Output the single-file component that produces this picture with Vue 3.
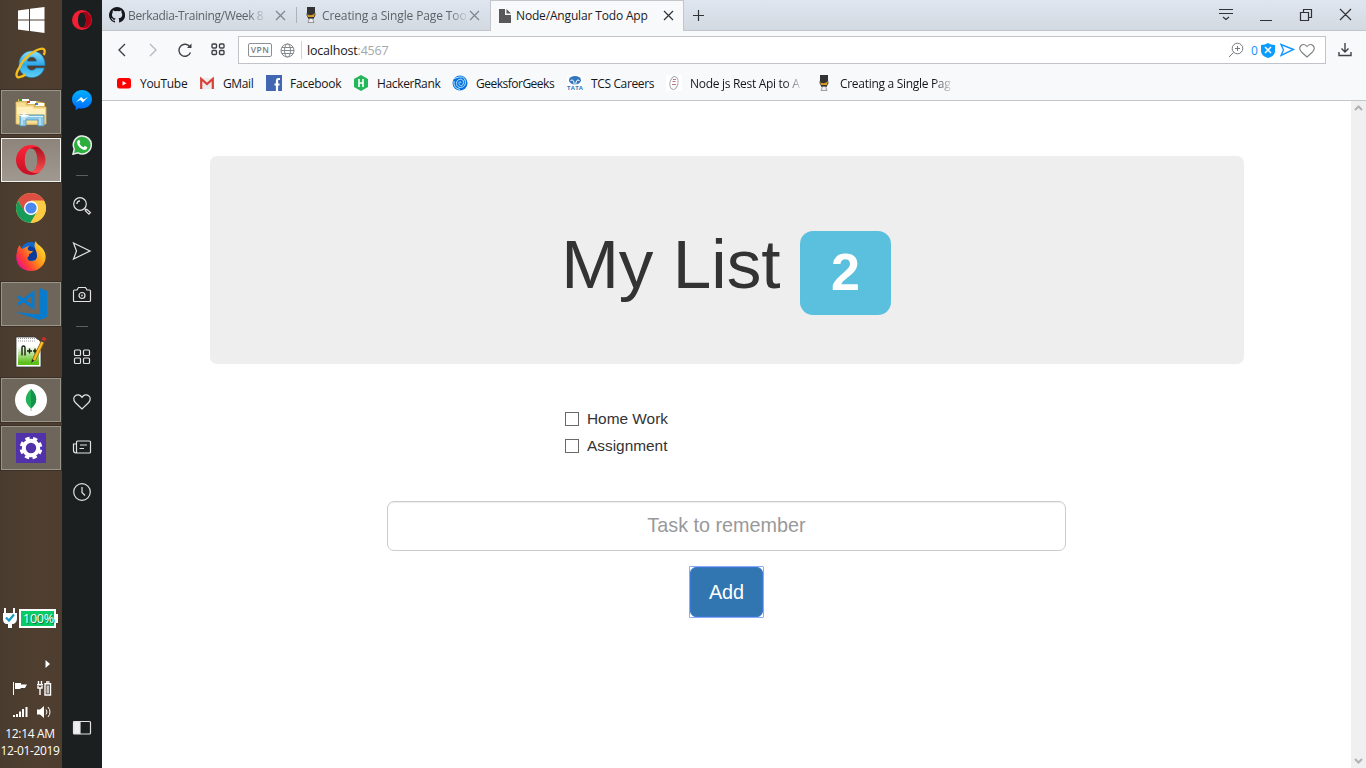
<script setup>
import { ref } from 'vue'

const bookmarks = [
  { id: 'youtube', label: 'YouTube', w: 83 },
  { id: 'gmail', label: 'GMail', w: 67 },
  { id: 'facebook', label: 'Facebook', w: 87 },
  { id: 'hacker', label: 'HackerRank', w: 99 },
  { id: 'geeks', label: 'GeeksforGeeks', w: 115 },
  { id: 'tcs', label: 'TCS Careers', w: 99 },
  { id: 'node', label: 'Node js Rest Api to A', w: 150, fade: true },
  { id: 'scotch', label: 'Creating a Single Pag', w: 140, fade: true }
]
const todos = ref([
  { text: 'Home Work', done: false },
  { text: 'Assignment', done: false }
])
const task = ref('')
</script>

<template>
  <div class="screen">
    <aside class="taskbar">
      <div class="slot start">
        <svg width="28" height="28" viewBox="0 0 28 28"><path fill="#fff" d="M1 4.6 12 3v10.4H1zM13 2.8 27.500 1v12.400H13zM1 14.400h11v10.500L1 23.500zM13 14.400h14.500V27L13 25z"/></svg>
      </div>
      <div class="slot ie">
        <svg width="32" height="32" viewBox="0 0 32 32">
          <defs><linearGradient id="ie" x1="0" y1="0" x2="0" y2="1"><stop offset="0" stop-color="#8be3fb"/><stop offset=".5" stop-color="#2fa9e8"/><stop offset="1" stop-color="#5fd0f7"/></linearGradient></defs>
          <path fill="url(#ie)" stroke="#1d7fc0" stroke-width=".6" d="M30 18.500H12c.3 3 2.300 4.700 4.700 4.700 2 0 3.300-.8 4.300-2.200h8.300c-1.600 5.500-6.300 9.500-12.500 9.500-7.500 0-12.800-5.500-12.800-13C4 10 9.400 4 16.700 4 25 4 30.300 10 30 18.500zM12.200 14.300h9.300c-.3-2.600-2.100-4.200-4.600-4.200-2.600 0-4.300 1.600-4.700 4.200z"/>
          <path fill="none" stroke="#f5bd1d" stroke-width="2.300" d="M4.500 20.500C0 27 1 31 4.500 30.200 8 29.500 10.500 27.500 10.500 27.500M4 21.500C7 13 17 4 25 2c5-1.300 5.500 2 3.800 6"/>
        </svg>
      </div>
      <div class="slot open">
        <svg width="34" height="32" viewBox="0 0 34 32">
          <path fill="#d8b65c" d="M4 3h10l2 2h7l8 2v22H4z"/><path fill="#fff" d="M6 3h9v2H6zM14 5h8v3h-8zM22 7h8v3h-8z"/><path fill="#22a322" d="M5 3h3v2H5z"/><path fill="#d54b32" d="M13 5h3v2h-3z"/><path fill="#2a83d5" d="M21 7h3v2h-3z"/>
          <path fill="#f8df91" stroke="#d9b866" stroke-width=".8" d="M2 6h10v3h8v2h12v17H2z"/><path fill="#fff0bd" d="M3 11h15l2 2h11v5H3z"/>
          <path fill="#8cc8e5" stroke="#4f94bd" stroke-width=".8" d="M6 19h24v11h-6v-6H12v6H6z"/><path stroke="#d7f2ff" d="M7 20.500h22M8 22v7M26 22v7"/><path stroke="#fff" stroke-width="1" d="M10 15v9M5.500 19.500h9M7.500 17l5 5M7.500 22l5-5"/>
        </svg>
      </div>
      <div class="slot open active">
        <svg width="32" height="32" viewBox="0 0 32 32"><defs><linearGradient id="op" x1="0" y1="0" x2="0" y2="1"><stop offset="0" stop-color="#ff2437"/><stop offset="1" stop-color="#c70f24"/></linearGradient><linearGradient id="opr" x1="0" y1="0" x2="0" y2="1"><stop offset="0" stop-color="#a90d1c"/><stop offset="1" stop-color="#ff5252"/></linearGradient></defs><path fill="url(#opr)" d="M11 5c4-4 9-4 13.500-1 8 6.500 8 17.500 0 24-4.500 3-9.500 3-13.500-1z"/><path fill="url(#op)" d="M16 1a15 15 0 1 0 0 30c3.500 0 6.600-1 9-3-6 3-15-.5-15-12S19 1 25 4c-2.400-2-5.500-3-9-3z"/><path fill="#918a81" d="M16 4.500c3.700 0 6.200 4.500 6.200 11.500S19.700 27.500 16 27.500 9.800 23 9.800 16 12.300 4.500 16 4.500z"/></svg>
      </div>
      <div class="slot">
        <svg width="32" height="32" viewBox="0 0 32 32"><circle cx="16" cy="16" r="15" fill="#fbca45"/><path fill="#dd4f43" d="M3 8.500A15 15 0 0 1 29 8.500H16v7.500l-6.300 4z"/><path fill="#179b59" d="M3 8.500A15 15 0 0 0 15.500 31l6.600-11.300-6.100 3.500-6.400-3.700z"/><path fill="#fbca45" d="M15.500 31A15 15 0 0 0 29.200 9H16l6.300 10z"/><circle cx="16" cy="16" r="7" fill="#fff"/><circle cx="16" cy="16" r="5.600" fill="#4a87ee"/></svg>
      </div>
      <div class="slot">
        <svg width="32" height="32" viewBox="0 0 32 32"><defs><linearGradient id="fx" x1="1" y1="0" x2="0" y2=".7"><stop offset="0" stop-color="#fff24a"/><stop offset=".45" stop-color="#ff9d17"/><stop offset=".8" stop-color="#ff3b36"/><stop offset="1" stop-color="#e9158c"/></linearGradient></defs><circle cx="16" cy="13" r="11" fill="#1467cf"/><path fill="#0b3c9c" d="M13 7c8-3 13 8 7 13l-7 1z"/><path fill="url(#fx)" d="M20 8c-1-3 0-6 1-7 0 3 4 4 7 8 7 10-1 22-12 22C5 31-1 22 2 12c0-3 1-5 3-7 0 2 1 3 2 4 2-1 4-2 7-3-1 2-2 3-1 4 1 1 3 1 5 1-1 2-3 3-4 3 1 3-2 3-2 4 2 5 10 4 10-2 0-4-1-5-2-8z"/></svg>
      </div>
      <div class="slot open">
        <svg width="34" height="34" viewBox="0 0 34 34"><path fill="#087bcd" d="M25.500 1 33 4v26l-7.500 3L1 25l24.500 2.500z"/><path fill="none" stroke="#087bcd" stroke-width="3" d="M4 9.500 19 20V6L4 17.500"/></svg>
      </div>
      <div class="slot">
        <svg width="32" height="34" viewBox="0 0 32 34"><defs><linearGradient id="np" x1="0" y1="0" x2="0" y2="1"><stop offset=".25" stop-color="#fff"/><stop offset=".9" stop-color="#5fbf1c"/></linearGradient></defs><path fill="#fff" stroke="#353535" stroke-width=".8" d="M1 2h19l6 5v25H1z"/><path fill="url(#np)" d="M3 5h21v25H3z"/><path stroke="#999" stroke-dasharray="1 1" d="M3 3.500h17M3 6h18"/><path fill="none" stroke="#16210f" stroke-width="1.400" d="M7 20.500V12.500Q7 11 8.500 11T10 12.500v8M12 16h5m-2.500-2.500v5M18 16h4m-2-2.500v5"/><path stroke="#9b650c" stroke-width="4" d="m19 25 8.500-18"/><path stroke="#f6bd26" stroke-width="2.400" d="m19 25 8.500-18"/><path stroke="#c72e2b" stroke-width="4" d="m28.300 5.500 1.400-3"/><path fill="#2c2920" d="m17 24-.7 4 3-2.500z"/></svg>
      </div>
      <div class="slot open">
        <svg width="32" height="32" viewBox="0 0 32 32"><circle cx="16" cy="16" r="16" fill="#fff"/><path fill="#21b25a" d="M16 5c7 7 7 14 0 19.500C9 19 9 12 16 5z"/><path fill="#15924a" d="M16 5c7 7 7 14 0 19.500z"/><path stroke="#aab4ac" d="M16 24v3"/></svg>
      </div>
      <div class="slot open">
        <svg width="30" height="30" viewBox="0 0 30 30"><path fill="#5232ab" d="M0 0h30v30H0z"/><circle cx="15" cy="15" r="7.200" fill="none" stroke="#fff" stroke-width="4"/><circle cx="15" cy="15" r="9.600" fill="none" stroke="#fff" stroke-width="3.500" stroke-dasharray="4.200 3.340" stroke-dashoffset="-1.700"/></svg>
      </div>
      <div class="tray">
        <div class="battery">
          <svg width="62" height="22" viewBox="0 0 62 22"><path fill="#fff" d="M4 1h2v5h7V1h2v5h2v5c0 4-2 6-5 6v4H8v-4c-4 0-5-2-5-6V6h1z"/><path fill="none" stroke="#159dc2" stroke-width="2.200" d="m6 10.500 3 3 5-6"/><path fill="#08cb66" stroke="#fff" stroke-width="2" d="M20 3h35v17H20z"/><path fill="#fff" d="M55 7h3v9h-3z"/></svg>
          <span>100%</span>
        </div>
        <svg class="more" width="6" height="10" viewBox="0 0 6 10"><path fill="#fff" d="M.500 1 5 5 .500 9z"/></svg>
        <div class="trayrow">
          <svg width="15" height="15" viewBox="0 0 15 15"><path fill="#fff" d="M0 1h1v13H0zM2 2h6v1.500h6L12 7H8L7 8H2z"/></svg>
          <svg width="15" height="15" viewBox="0 0 15 15"><path fill="none" stroke="#fff" stroke-width="1.400" d="M1.500 0v3M4.500 0v3M0 3.700h6M1 5v2h4V5M3 7v7M8 2.700h5.500V14H8zM9 1h3.500"/><path fill="#c8c4bf" d="M9.500 4.500h2.500v8H9.500z"/></svg>
        </div>
        <div class="trayrow levels">
          <svg width="15" height="12" viewBox="0 0 15 12"><path fill="#fff" d="M0 9h2v2H0zM3 8h2v3H3zM6 5.500h2V11H6zM9 3h2v8H9zM12.500 1h2v10h-2z"/></svg>
          <svg width="15" height="14" viewBox="0 0 15 14"><path fill="#fff" d="M0 4.500h3L7 1v12L3 9.500H0z"/><path fill="none" stroke="#fff" d="M9 4.500q2 2.500 0 5M11 2q4 5 0 10"/></svg>
        </div>
        <time>12:14 AM</time>
        <time class="date">12-01-2019</time>
      </div>
    </aside>

    <aside class="sidebar">
      <svg class="s-opera" width="20" height="20" viewBox="0 0 20 20"><path fill="#f31f35" fill-rule="evenodd" d="M10 0a10 10 0 1 0 0 20 10 10 0 0 0 0-20zm0 2.500c2.500 0 4 3 4 7.500s-1.500 7.500-4 7.500S6 14.500 6 10s1.500-7.500 4-7.500z"/><path fill="#a70014" d="M10 2.500C13 1 15 2 16 3q7 7 0 14c-2 1.300-4 1.300-6 .5 6 0 5-15 0-15z"/></svg>
      <svg class="s-msg" width="20" height="20" viewBox="0 0 20 20"><defs><linearGradient id="msg" x1="0" y1="0" x2="0" y2="1"><stop stop-color="#00b0ff"/><stop offset="1" stop-color="#006cff"/></linearGradient></defs><path fill="url(#msg)" d="M10 0C4.500 0 0 4 0 9.300c0 3 1.500 5.500 3.700 7.200V20l3.200-1.800c6.700 1.700 13.100-2.600 13.100-8.900C20 4 15.600 0 10 0z"/><path fill="#fff" d="m4 12 5.200-5 2.500 2.500L16 7l-5.200 5.400L8.300 10z"/></svg>
      <svg class="s-wa" width="20" height="20" viewBox="0 0 20 20"><path fill="#2daf3f" stroke="#e9eeeb" stroke-width="1.500" d="M1 19.200 2.300 14A9 9 0 1 1 6 17.800z"/><path fill="#fff" d="M7 5c.5 0 .6.200 1.300 2.100L7.500 8.600c1 1.900 2 2.800 3.900 3.700l1.400-1.400 2.400 1.200c0 2-1 2.800-2.600 2.900-3.700-.4-7-4-7.500-7.200C5 6.300 5.900 5 7 5z"/></svg>
      <i class="rule"></i>
      <svg class="s-line search" width="20" height="20" viewBox="0 0 20 20"><circle cx="8" cy="8" r="6.300"/><path d="M4.800 8A3.500 3.500 0 0 1 8 4.800M12.500 12.500l1.200 1.200m-.4 1.100 1.500-1.500 3.600 3.200-1.500 1.600z"/></svg>
      <svg class="s-line send" width="20" height="20" viewBox="0 0 20 20"><path d="m1.500 2 16.500 8L1.500 18l3-8z"/></svg>
      <svg class="s-line camera" width="20" height="20" viewBox="0 0 20 20"><path d="M2.500 5H5l1.500-2.500h7L15 5h2.500q1 0 1 1v9.500q0 1-1 1h-15q-1 0-1-1V6q0-1 1-1z"/><circle cx="10" cy="10.500" r="3"/><circle cx="10" cy="10.500" r=".3"/></svg>
      <i class="rule two"></i>
      <svg class="s-line dial" width="20" height="20" viewBox="0 0 20 20"><rect x="2.500" y="3" width="6" height="5.500" rx="1"/><rect x="11.500" y="3" width="6" height="5.500" rx="1"/><rect x="2.500" y="11" width="6" height="5.500" rx="1"/><rect x="11.500" y="11" width="6" height="5.500" rx="1"/></svg>
      <svg class="s-line heart" width="20" height="20" viewBox="0 0 20 20"><path d="M10 17 3.300 10.500C-1.500 5 6-.5 10 5.300 14-.5 21.500 5 16.700 10.500z"/></svg>
      <svg class="s-line news" width="20" height="20" viewBox="0 0 20 20"><path d="M5.500 4h12q1 0 1 1v10q0 1-1 1H4q-2.500-.2-2.500-2.500V7h3M4.500 16V5q0-1 1-1M8 8h7M7.500 11.500H12"/></svg>
      <svg class="s-line clock" width="20" height="20" viewBox="0 0 20 20"><circle cx="10" cy="10" r="8.300"/><path d="M10 5v5.500l3 3"/></svg>
      <svg class="s-line panel" width="20" height="16" viewBox="0 0 20 16"><rect x="1.500" y="1.500" width="17" height="12.500" rx="1"/><path fill="#eee" d="M2 2h6v11.500H2z"/></svg>
    </aside>

    <main class="browser">
      <header class="tabs">
        <div class="tab first">
          <svg width="16" height="16" viewBox="0 0 16 16"><path fill="#15171a" d="M8 0a8 8 0 0 0-2.500 15.600c.4 0 .5-.2.500-.4v-1.500c-2.200.5-2.700-.9-2.700-.9-.4-.9-.9-1.200-.9-1.200-.7-.5.1-.5.1-.5.8.1 1.200.8 1.200.8.7 1.200 1.900.9 2.400.7 0-.5.300-.9.500-1.100C4.800 11.300 3 10.600 3 7.600c0-.9.300-1.600.800-2.100-.1-.2-.4-1 .1-2.100 0 0 .7-.2 2.200.8a7.600 7.600 0 0 1 4 0c1.500-1 2.200-.8 2.200-.8.400 1.100.1 1.900.1 2.100.5.500.8 1.200.8 2.100 0 3-1.900 3.700-3.700 3.900.3.300.6.700.6 1.500v2.200c0 .2.100.5.500.4A8 8 0 0 0 8 0z"/></svg>
          <span class="fade">Berkadia-Training/Week 8</span>
          <svg class="x" width="11" height="11" viewBox="0 0 11 11"><path d="m1 1 9 9M10 1l-9 9"/></svg>
        </div>
        <div class="tab second">
          <svg width="12" height="16" viewBox="0 0 12 16"><path fill="#333" d="M2 0h8v5l.5 3-2 4H3.500L1.500 8 2 5z"/><path fill="#d99b20" d="M2 7q4 3 8-1l-1 4H3z"/><path fill="#eee" stroke="#777" stroke-width=".7" d="M4.500 11.500h3L9 15.500H3z"/></svg>
          <span class="fade">Creating a Single Page Too</span>
          <svg class="x" width="11" height="11" viewBox="0 0 11 11"><path d="m1 1 9 9M10 1l-9 9"/></svg>
        </div>
        <div class="tab current">
          <svg width="12" height="14" viewBox="0 0 12 14"><path fill="#58585a" d="M0 0h6v6h6v8H0zM7.500 0 12 4.500H7.500z"/></svg>
          <span>Node/Angular Todo App</span>
          <svg class="x" width="11" height="11" viewBox="0 0 11 11"><path d="m1 1 9 9M10 1l-9 9"/></svg>
        </div>
        <svg class="plus" width="13" height="13" viewBox="0 0 13 13"><path d="M6.500 1v11M1 6.500h11"/></svg>
        <svg class="winctl" width="134" height="16" viewBox="0 0 134 16"><path d="M1 2.500h14M1 6.500h14M5 10l3 2.500L11 10M42 13.500h12M82.500 5.500h8v8h-8zM85.500 5V2.500h8v8H91M122 2l11 11M133 2l-11 11"/></svg>
      </header>

      <nav class="address">
        <svg class="back" width="10" height="16" viewBox="0 0 10 16"><path d="M8 2 2 8l6 6"/></svg>
        <svg class="forward" width="10" height="16" viewBox="0 0 10 16"><path d="m2 2 6 6-6 6"/></svg>
        <svg class="reload" width="16" height="16" viewBox="0 0 16 16"><path d="M13.500 10.500A6 6 0 1 1 13 5"/><path class="solid" d="M14.500 1.500V6H10z"/></svg>
        <svg class="grid" width="14" height="13" viewBox="0 0 14 13"><rect x="1" y="1" width="4.500" height="4" rx="1"/><rect x="8.500" y="1" width="4.500" height="4" rx="1"/><rect x="1" y="7.500" width="4.500" height="4" rx="1"/><rect x="8.500" y="7.500" width="4.500" height="4" rx="1"/></svg>
        <div class="field">
          <span class="vpn">VPN</span>
          <svg class="globe" width="15" height="15" viewBox="0 0 15 15"><circle cx="7.500" cy="7.500" r="6.500"/><ellipse cx="7.500" cy="7.500" rx="3" ry="6.500"/><path d="M1 7.500h13M2 4.500h11M2 10.500h11"/></svg>
          <i></i>
          <span class="url">localhost<em>:4567</em></span>
          <svg class="zoomer" width="16" height="16" viewBox="0 0 16 16"><circle cx="9.500" cy="6.500" r="5.300"/><path d="M9.500 4v5M7 6.500h5M5.500 10.500 1 15"/></svg>
          <b>0</b>
          <svg class="shield" width="14" height="15" viewBox="0 0 14 15"><path fill="#0b9cff" d="M0 2q4 0 7-2 3 2 7 2v6q0 5-7 7-7-2-7-7z"/><path stroke="#fff" stroke-width="1.500" d="m4 4 6 6M10 4l-6 6"/></svg>
          <svg class="flow" width="15" height="14" viewBox="0 0 15 14"><path d="m1 1.500 12.500 5-12.500 6L3.500 7z"/></svg>
          <svg class="love" width="16" height="15" viewBox="0 0 16 15"><path d="M8 14 2.500 9C-2 4 4-1.500 8 3.500 12-1.500 18 4 13.500 9z"/></svg>
        </div>
        <svg class="download" width="14" height="15" viewBox="0 0 14 15"><path d="M7 1v9M3.500 6.500 7 10l3.500-3.500M1 10v3.500h12V10"/></svg>
      </nav>

      <div class="bookmarks">
        <div v-for="b in bookmarks" :key="b.id" class="bookmark" :class="b.id" :style="{ width: b.w + 'px' }">
          <svg v-if="b.id === 'youtube'" width="16" height="16" viewBox="0 0 16 16"><rect x="1" y="3" width="14" height="10.500" rx="2.500" fill="#f00"/><path fill="#fff" d="m6.500 6 4 2.300-4 2.300z"/></svg>
          <svg v-else-if="b.id === 'gmail'" width="16" height="16" viewBox="0 0 16 16"><path fill="#ececec" d="M1 3h14v11H1z"/><path fill="none" stroke="#d94136" stroke-width="2.200" d="M2.200 14V4L8 9l5.800-5v10"/></svg>
          <svg v-else-if="b.id === 'facebook'" width="16" height="16" viewBox="0 0 16 16"><path fill="#4267b2" d="M0 0h16v16H0z"/><path fill="none" stroke="#fff" stroke-width="2.200" d="M14 4h-1.500Q11 4 11 6v10M8.500 9.500h5"/></svg>
          <svg v-else-if="b.id === 'hacker'" width="16" height="16" viewBox="0 0 16 16"><path fill="#24b65a" d="m8 0 7 4v8l-7 4-7-4V4z"/><path fill="none" stroke="#fff" stroke-width="1.600" d="M6 4v8m4-8v8M6 8h4"/></svg>
          <svg v-else-if="b.id === 'geeks'" width="16" height="16" viewBox="0 0 16 16"><circle cx="8" cy="8" r="7.500" fill="#0a72e0"/><path fill="none" stroke="#b4e8ff" stroke-width="1" d="M2 3.500Q13-1 13.500 7c0 7-9 7-9 1.500S12 3 11.500 7.500 7 11 7 8.500 9 6.500 9 8M2 6q-1 7 6 8.500"/></svg>
          <svg v-else-if="b.id === 'tcs'" width="16" height="16" viewBox="0 0 16 16"><path fill="#fff" d="M0 0h16v16H0z"/><ellipse cx="8" cy="5.200" rx="6" ry="4.200" fill="#3476bd"/><path fill="none" stroke="#fff" stroke-width="1" d="M3.500 5.500Q7 3.500 7.200 9.500m5.300-4Q9 3.500 8.800 9.500"/><text x="0" y="15" textLength="16" class="tata">TATA</text></svg>
          <svg v-else-if="b.id === 'node'" width="16" height="16" viewBox="0 0 16 16"><path fill="#fff" d="M0 0h16v16H0z"/><ellipse cx="8" cy="8" rx="4" ry="6.500" fill="none" stroke="#aaa" transform="rotate(12 8 8)"/><path stroke="#b97483" d="M7 4.500h3M6.500 6.500h3M6 9.500h4"/></svg>
          <svg v-else width="16" height="16" viewBox="0 0 16 16"><path fill="#333" d="M4 0h8v5l.5 3-2 4h-5l-2-4L4 5z"/><path fill="#d99b20" d="M4 7q4 3 8-1l-1 4H5z"/><path fill="#eee" stroke="#777" stroke-width=".7" d="M6.500 11.500h3l1.500 4H5z"/></svg>
          <span :class="{ fade: b.fade }">{{ b.label }}</span>
        </div>
      </div>

      <div class="viewport">
        <section class="page">
          <div class="jumbo"><h1>My List <span class="label">{{ todos.length }}</span></h1></div>
          <div class="list">
            <label v-for="t in todos" :key="t.text"><input v-model="t.done" type="checkbox"><span>{{ t.text }}</span></label>
          </div>
          <form @submit.prevent>
            <input v-model="task" class="task" type="text" placeholder="Task to remember">
            <div class="focus"><button type="submit">Add</button></div>
          </form>
        </section>
        <div class="scroll">
          <svg width="9" height="6" viewBox="0 0 9 6"><path d="m1 5 3.500-3.500L8 5"/></svg>
          <svg width="9" height="6" viewBox="0 0 9 6"><path d="m1 1 3.500 3.500L8 1"/></svg>
        </div>
      </div>
    </main>
  </div>
</template>

<style>
body { overflow: hidden; }
</style>

<style scoped>
* { box-sizing: border-box; }
svg { display: block; flex: none; }
.screen { width: 1366px; height: 768px; display: flex; overflow: hidden; font: 12px "Open Sans", "Noto Sans", sans-serif; background: #fff; }
.taskbar { width: 62px; height: 768px; flex: none; display: flex; flex-direction: column; background: linear-gradient(90deg, #493c2e, #503f31 65%, #4d3d2f); color: #fff; }
.slot { height: 44px; flex: none; margin: 2px 1px; display: flex; align-items: center; justify-content: center; }
.slot.start { height: 36px; }
.slot.ie { padding-bottom: 2px; }
.slot.open { border: 1px solid #9b948b; background: #6f665b; box-shadow: 0 0 0 1px #3c3127; }
.slot.active { border-color: #f4f2ef; background: linear-gradient(#8d857c, #a09991); }
.tray { margin-top: auto; height: 161px; position: relative; display: flex; flex-direction: column; align-items: center; }
.battery { position: relative; width: 62px; height: 22px; }
.battery span { position: absolute; left: 23px; top: 3px; line-height: 17px; font-size: 12.5px; letter-spacing: -.25px; text-shadow: 1px 1px #087c44; }
.more { margin: 30px 0 0 34px; }
.trayrow { display: flex; gap: 9px; margin: 12px 0 0 2px; }
.trayrow.levels { margin-top: 9px; align-items: center; }
time { font-size: 12px; line-height: 17px; margin: 6px 2px 0 0; letter-spacing: -.35px; white-space: nowrap; }
time.date { margin-top: 0; letter-spacing: -.35px; }
.sidebar { width: 40px; flex: none; display: flex; flex-direction: column; align-items: center; padding-right: 1px; background: #1b1f1f; }
.s-opera { margin-top: 10px; }
.s-msg { margin-top: 60px; }
.s-wa { margin-top: 25px; }
.rule { width: 12px; height: 1px; margin-top: 20px; background: #5a5e5e; flex: none; }
.s-line { fill: none; stroke: #e2e4e4; stroke-width: 1.2; }
.search { margin-top: 20px; }
.send { margin-top: 25px; }
.camera { margin-top: 24px; }
.rule.two { margin-top: 21px; }
.dial { margin-top: 20px; }
.heart, .news, .clock { margin-top: 25px; }
.panel { margin-top: auto; margin-bottom: 32px; }
.browser { flex: 1; min-width: 0; display: flex; flex-direction: column; }
.tabs { height: 31px; flex: none; display: flex; align-items: center; border-bottom: 1px solid #c3c6ca; background: linear-gradient(#dfe6ef, #d3d9e1); color: #5f6368; }
.tab { display: flex; align-items: center; height: 31px; flex: none; }
.tab span { white-space: nowrap; letter-spacing: -.16px; }
.first { width: 195px; padding: 0 11px 0 7px; position: relative; }
.first::after { content: ''; position: absolute; right: 0; top: 7px; height: 16px; width: 1px; background: #adb2b8; }
.tab.first span { width: 139px; margin-left: 3px; letter-spacing: -.36px; }
.second { width: 193px; padding: 0 10px 0 8px; }
.tab.second span { width: 147px; margin-left: 5px; overflow: hidden; letter-spacing: -.12px; }
.tab .x { margin-left: auto; }
.x path, .plus path, .winctl path { fill: none; stroke: #303236; stroke-width: 1.2; }
.first .x path, .second .x path { stroke: #81858b; }
.current { width: 194px; padding: 0 9px 0 8px; border: 1px solid #c3c6ca; border-bottom: 0; background: #f8f9fb; color: #191b1e; }
.current span { margin-left: 5px; }
.plus { margin-left: 8px; }
.winctl { margin-left: auto; margin-right: 14px; }
.fade { -webkit-mask-image: linear-gradient(90deg, #000 calc(100% - 20px), transparent); mask-image: linear-gradient(90deg, #000 calc(100% - 20px), transparent); }
.address { height: 37px; padding-left: 15px; flex: none; display: flex; align-items: center; background: #f8f9fb; }
.address svg { fill: none; stroke: #3e4247; stroke-width: 1.4; }
.forward { margin-left: 21px; }
.address .forward { stroke: #b7babe; }
.address .reload { margin-left: 19px; }
.address .reload .solid { fill: #3e4247; stroke: none; }
.grid { margin-left: 18px; }
.field { margin-left: 13px; width: 1088px; height: 28px; border: 1px solid #c1c5c9; background: #fff; display: flex; align-items: center; padding: 0 10px 0 9px; position: relative; top: .5px; }
.vpn { width: 24px; height: 14px; border: 1px solid #8c9095; border-radius: 2px; color: #777c81; font-size: 8.500px; font-weight: 600; line-height: 12px; text-align: center; letter-spacing: .5px; }
.field .globe { margin-left: 8px; stroke: #85898d; stroke-width: 1; }
.field i { width: 1px; height: 18px; margin-left: 6px; background: #cfd2d4; }
.url { margin-left: 5px; font-size: 12.5px; color: #16181a; letter-spacing: -.2px; }
.url em { font-style: normal; color: #a4a7aa; }
.field .zoomer { margin-left: auto; stroke: #75797c; stroke-width: 1; }
.field b { font-weight: 400; color: #148fff; margin-left: 7px; width: 10px; }
.field .shield { stroke: none; }
.field .flow { margin-left: 5px; stroke: #1697ff; }
.field .love { margin-left: 4px; stroke: #7c8084; stroke-width: 1.1; }
.download { margin-left: 12px; }
.bookmarks { height: 33px; padding: 0 0 2px 14px; flex: none; display: flex; align-items: center; border-bottom: 1px solid #c4c7ca; background: #f8f9fb; color: #15171a; }
.bookmark { display: flex; align-items: center; flex: none; }
.bookmark span { margin-left: 8px; white-space: nowrap; letter-spacing: -.36px; }
.bookmark.facebook span { letter-spacing: -.28px; }
.bookmark.youtube span { letter-spacing: -.28px; }
.bookmark.geeks span { letter-spacing: -.5px; }
.bookmark .fade { width: 114px; letter-spacing: -.3px; }
.tata { font: bold 6px "Open Sans", sans-serif; fill: #3476bd; stroke: none; }
.viewport { flex: 1; display: flex; min-height: 0; }
.page { flex: 1; padding: 55px 107px 0 108px; font-family: "Liberation Sans", Arial, sans-serif; color: #333; }
.jumbo { height: 208px; border-radius: 7px; background: #eee; padding: 70px 2px 0 0; }
h1 { margin: 0; font-weight: 500; font-size: 69.3px; line-height: 76px; text-align: center; white-space: nowrap; }
.label { display: inline-block; width: 91px; height: 84px; margin-top: 5px; padding-top: 15px; background: #5bc0de; border-radius: 13px; color: #fff; font-weight: 700; font-size: 52px; line-height: 52px; vertical-align: top; }
.list { margin: 45px 0 0 355px; display: flex; flex-direction: column; }
.list label { display: flex; align-items: center; height: 20px; margin-bottom: 7px; font-size: 15.4px; line-height: 20px; }
.list input { appearance: none; width: 14px; height: 14px; margin: 0 8px 0 0; border: 1px solid #696969; background: #fff; }
form { display: flex; flex-direction: column; align-items: center; margin: 38px 1px 0 0; }
.task { width: 679px; height: 50px; border: 1px solid #ccc; border-radius: 7px; box-shadow: inset 0 1px 1px rgba(0, 0, 0, .075); text-align: center; font: 19.8px "Liberation Sans", Arial, sans-serif; padding: 0 17px 2px; }
.task::placeholder { color: #999; }
.focus { width: 75px; height: 52px; margin-top: 15px; border: 1px solid #86adf3; border-radius: 1px; }
button { display: block; width: 73px; height: 50px; padding: 0; border: 1px solid #3b76cf; border-radius: 6px; background: #3276b1; color: #fff; font: 19.8px "Liberation Sans", Arial, sans-serif; outline: 0; }
.scroll { width: 15px; background: #f0f0f0; display: flex; flex-direction: column; align-items: center; justify-content: space-between; padding: 4px 0 4px; }
.scroll path { fill: none; stroke: #b0b2b4; stroke-width: 2; }
</style>
